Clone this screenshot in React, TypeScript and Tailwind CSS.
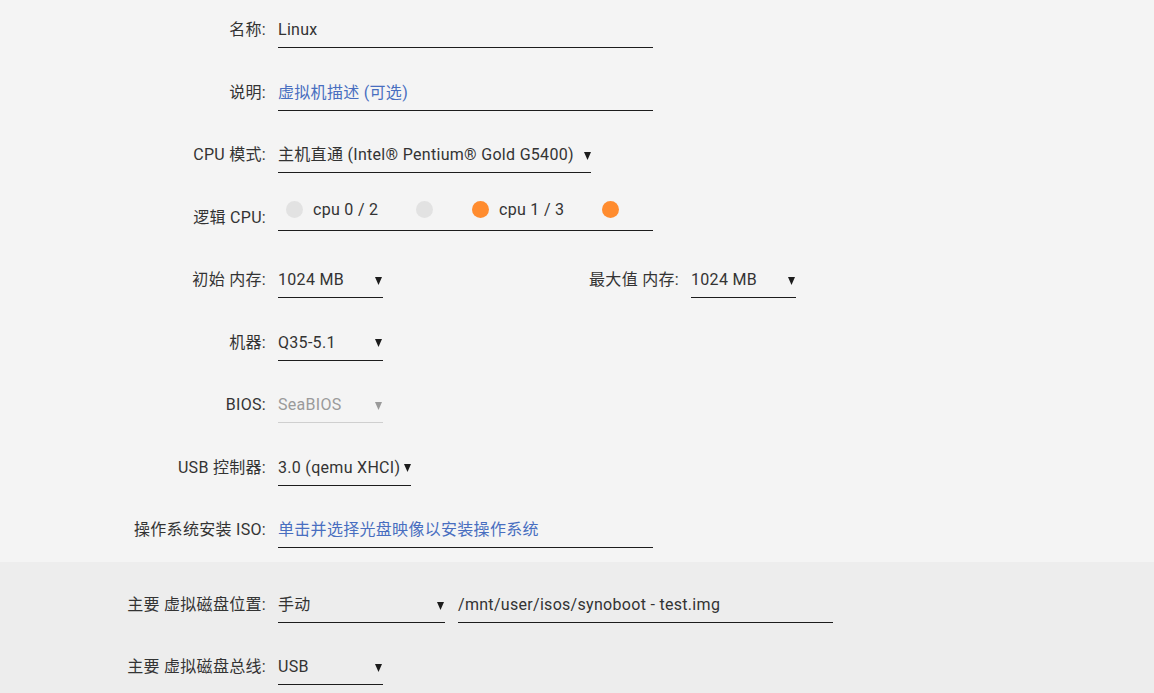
import React from 'react'

const font = { fontFamily: 'Roboto, "Noto Sans CJK SC", sans-serif' }

function Arrow({ dim }: { dim?: boolean }) {
  return (
    <svg width="7" height="9" viewBox="0 0 7 9" className="shrink-0">
      <polygon points="0,1 7,1 3.5,9" fill={dim ? '#9a9a9a' : '#1c1c1c'} />
    </svg>
  )
}

function Label({ children, w = 'w-[266px]' }: { children: React.ReactNode; w?: string }) {
  return <div className={`${w} shrink-0 text-right pt-[1px] leading-5 text-[#333]`}>{children}</div>
}

function Field({ w, children, dim, blue }: { w: string; children: React.ReactNode; dim?: boolean; blue?: boolean }) {
  return (
    <div
      className={`${w} flex items-center justify-between gap-[3px] leading-5 pt-[1px] pb-[7px] border-b ${
        dim ? 'border-[#cfcfcf] text-[#9a9a9a]' : blue ? 'border-[#1c1c1c] text-[#486ec0]' : 'border-[#1c1c1c] text-[#333]'
      }`}
    >
      {children}
    </div>
  )
}

function Row({ label, children }: { label: string; children: React.ReactNode }) {
  return (
    <div className="flex items-start gap-3 h-[62.5px]">
      <Label>{label}</Label>
      {children}
    </div>
  )
}

function CpuGroup({ label, on }: { label: string; on?: boolean }) {
  const dot = on ? 'bg-[#ff8c2f]' : 'bg-[#e2e2e2]'
  return (
    <div className="w-[186px] flex items-center pl-2">
      <span className={`w-[17px] h-[17px] rounded-full ${dot}`} />
      <span className="w-[113px] pl-[10px] text-[#333]">{label}</span>
      <span className={`w-[17px] h-[17px] rounded-full ${dot}`} />
    </div>
  )
}

export default function App() {
  return (
    <div className="w-[1154px] h-[693px] overflow-hidden bg-[#f4f4f4] text-[16px] tracking-[0.3px]" style={font}>
      <div className="h-[562px] pt-[19px]">
        <Row label="名称:">
          <Field w="w-[375px]">Linux</Field>
        </Row>
        <Row label="说明:">
          <Field w="w-[375px]" blue>
            虚拟机描述 (可选)
          </Field>
        </Row>
        <Row label="CPU 模式:">
          <Field w="w-[313px]">
            <span className="whitespace-nowrap">主机直通 (Intel® Pentium® Gold G5400)</span>
            <Arrow />
          </Field>
        </Row>
        <div className="flex items-start gap-3 h-[62.5px]">
          <Label>逻辑 CPU:</Label>
          <div className="w-[375px] -mt-[7px] pb-[10px] leading-5 flex border-b border-[#1c1c1c]">
            <CpuGroup label="cpu 0 / 2" />
            <CpuGroup label="cpu 1 / 3" on />
          </div>
        </div>
        <div className="flex items-start h-[62.5px]">
          <div className="flex items-start gap-3">
            <Label>初始 内存:</Label>
            <Field w="w-[105px]">
              <span>1024 MB</span>
              <span className="pr-[1px]"><Arrow /></span>
            </Field>
          </div>
          <div className="flex items-start gap-3">
            <Label w="w-[296px]">最大值 内存:</Label>
            <Field w="w-[105px]">
              <span>1024 MB</span>
              <span className="pr-[1px]"><Arrow /></span>
            </Field>
          </div>
        </div>
        <Row label="机器:">
          <Field w="w-[105px]">
            <span>Q35-5.1</span>
            <span className="pr-[1px]"><Arrow /></span>
          </Field>
        </Row>
        <Row label="BIOS:">
          <Field w="w-[105px]" dim>
            <span>SeaBIOS</span>
            <span className="pr-[1px]"><Arrow dim /></span>
          </Field>
        </Row>
        <Row label="USB 控制器:">
          <Field w="w-[133px]">
            <span className="whitespace-nowrap">3.0 (qemu XHCI)</span>
            <Arrow />
          </Field>
        </Row>
        <Row label="操作系统安装 ISO:">
          <Field w="w-[375px]" blue>
            单击并选择光盘映像以安装操作系统
          </Field>
        </Row>
      </div>
      <div className="h-[131px] bg-[#ededed] pt-[32px]">
        <div className="flex items-start gap-3 h-[62px]">
          <Label>主要 虚拟磁盘位置:</Label>
          <Field w="w-[167px]">
            <span>手动</span>
            <span className="pr-[1px]"><Arrow /></span>
          </Field>
          <div className="w-[375px] ml-[1px] leading-5 pt-[1px] pb-[7px] border-b border-[#1c1c1c] text-[#333]">
            /mnt/user/isos/synoboot - test.img
          </div>
        </div>
        <div className="flex items-start gap-3 h-[62px]">
          <Label>主要 虚拟磁盘总线:</Label>
          <Field w="w-[105px]">
            <span>USB</span>
            <span className="pr-[1px]"><Arrow /></span>
          </Field>
        </div>
      </div>
    </div>
  )
}
